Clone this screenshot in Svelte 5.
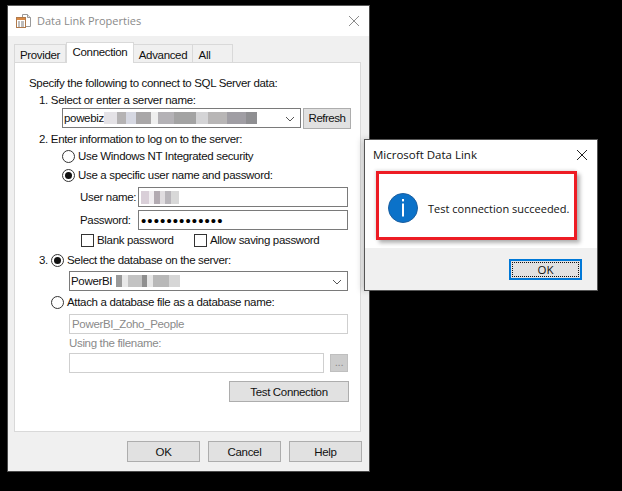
<script>
    const dots = '•••••••••••••';
</script>

<main class="desktop">
    <section class="dialog props">
        <header class="titlebar">
            <svg class="app-icon" width="16" height="16" viewBox="0 0 16 16">
                <path d="M6.5 1.5h5l3 3v9h-8z" fill="#fff" stroke="#9a9a9a" />
                <path d="M11.5 1.5v3h3" fill="#e6e6e6" stroke="#9a9a9a" />
                <rect x="0.5" y="4.5" width="9" height="10" fill="#fff" stroke="#b07a4c" />
                <rect x="1" y="5" width="8" height="2" fill="#d98a45" />
                <path d="M2 9h2M5 9h3M2 11h2M5 11h3M2 13h2M5 13h3" stroke="#7d7d7d" />
            </svg>
            <span class="title">Data Link Properties</span>
            <svg class="close" width="12" height="12" viewBox="0 0 12 12">
                <path d="M1 1l10 10M11 1L1 11" stroke="#8c8c8c" fill="none" />
            </svg>
        </header>

        <div class="body">
            <div class="tabs">
                <div class="tab t1">Provider</div>
                <div class="tab t2 active">Connection</div>
                <div class="tab t3">Advanced</div>
                <div class="tab t4">All</div>
            </div>

            <div class="panel">
                <div class="row">Specify the following to connect to SQL Server data:</div>
                <div class="row step">1. Select or enter a server name:</div>
                <div class="server-row">
                    <div class="combo server">
                        <span>powebiz</span><span class="blur blur-server"></span>
                        <svg class="chev" width="10" height="6" viewBox="0 0 10 6"><path d="M1 1l4 4 4-4" fill="none" stroke="#555" /></svg>
                    </div>
                    <div class="btn refresh">Refresh</div>
                </div>
                <div class="row step gap-s">2. Enter information to log on to the server:</div>
                <div class="row radio-row indent nudge">
                    <span class="radio"></span>Use Windows NT Integrated security
                </div>
                <div class="row radio-row indent gap-xs">
                    <span class="radio on"></span>Use a specific user name and password:
                </div>
                <div class="field-row first">
                    <label for="user">User name:</label>
                    <div id="user" class="input"><span class="blur blur-user"></span></div>
                </div>
                <div class="field-row second">
                    <label for="pass">Password:</label>
                    <div id="pass" class="input dots">{dots}</div>
                </div>
                <div class="row checks">
                    <span class="check-item c1"><span class="check"></span>Blank password</span>
                    <span class="check-item"><span class="check"></span>Allow saving password</span>
                </div>
                <div class="row radio-row db">
                    <span class="num">3.</span><span class="radio on"></span>Select the database on the server:
                </div>
                <div class="combo db-combo">
                    <span>PowerBI</span><span class="blur blur-db"></span>
                    <svg class="chev" width="10" height="6" viewBox="0 0 10 6"><path d="M1 1l4 4 4-4" fill="none" stroke="#555" /></svg>
                </div>
                <div class="row radio-row attach">
                    <span class="radio"></span>Attach a database file as a database name:
                </div>
                <div class="input wide disabled-input">PowerBI_Zoho_People</div>
                <div class="row muted using">Using the filename:</div>
                <div class="file-row">
                    <div class="input file"></div>
                    <div class="browse">...</div>
                </div>
                <div class="test-row"><div class="btn test">Test Connection</div></div>
            </div>

            <footer class="actions">
                <div class="btn act">OK</div>
                <div class="btn act">Cancel</div>
                <div class="btn act">Help</div>
            </footer>
        </div>
    </section>

    <section class="dialog msg">
        <div class="msg-top">
            <header class="msg-title">
                <span>Microsoft Data Link</span>
                <svg width="12" height="12" viewBox="0 0 12 12">
                    <path d="M1 1l10 10M11 1L1 11" stroke="#222" fill="none" />
                </svg>
            </header>
            <div class="msg-content">
                <svg width="30" height="30" viewBox="0 0 30 30">
                    <circle cx="15" cy="15" r="14.5" fill="#0b72c9" stroke="#1b5e9f" />
                    <rect x="14" y="6" width="2" height="2.4" fill="#fff" />
                    <rect x="14" y="10.5" width="2" height="13" fill="#fff" />
                </svg>
                <span>Test connection succeeded.</span>
            </div>
        </div>
        <div class="msg-foot">
            <div class="msg-ok"><span>OK</span></div>
        </div>
    </section>
</main>

<style>
    :global(body) {
        margin: 0;
        background: #000;
    }

    .desktop {
        position: relative;
        width: 622px;
        height: 491px;
        background: #000;
        overflow: hidden;
        font-family: "Liberation Sans", Arial, sans-serif;
        font-size: 11.5px;
        letter-spacing: -0.33px;
        color: #111;
    }

    .dialog {
        position: absolute;
        box-sizing: border-box;
    }

    .props {
        left: 7px;
        top: 5px;
        width: 363px;
        height: 467px;
        border: 1px solid #4a4a4a;
        border-top: 1px solid #5a5a5a;
        background: #f0f0f0;
    }

    .titlebar {
        display: flex;
        align-items: center;
        height: 30px;
        padding: 0 9px 0 8px;
        background: #fff;
    }

    .app-icon {
        margin-right: 5px;
    }

    .title {
        flex: 1;
        margin-top: -2px;
        font-family: "Open Sans", sans-serif;
        font-size: 11px;
        letter-spacing: 0;
        color: #8a8a8a;
    }

    .body {
        padding: 7px 0 0 6px;
    }

    .tabs {
        display: flex;
        align-items: flex-end;
        height: 20px;
        position: relative;
        z-index: 1;
        margin-bottom: -1px;
    }

    .tab {
        box-sizing: border-box;
        height: 19px;
        line-height: 20px;
        text-align: center;
        border: 1px solid #d9d9d9;
        border-left: 0;
        border-bottom: 0;
    }

    .t1 { width: 52px; border-left: 1px solid #d9d9d9; }
    .t3 { width: 59px; }
    .t4 { width: 40px; padding-right: 16px; }
    .t2 {
        width: 68px;
        height: 21px;
        line-height: 19px;
        background: #fff;
        border-left: 1px solid #d9d9d9;
    }

    .panel {
        box-sizing: border-box;
        width: 347px;
        height: 370px;
        padding: 12px 0 0 14px;
        background: #fff;
        border: 1px solid #d9d9d9;
    }

    .row {
        height: 16px;
        line-height: 16px;
        white-space: nowrap;
    }

    .step { margin-left: 10px; margin-top: 1px; }
    .gap-s { margin-top: 3px; }
    .indent { margin-left: 33px; }
    .nudge { margin-top: 1px; }
    .gap-xs { margin-top: 3px; }

    .radio-row {
        display: flex;
        align-items: center;
    }

    .radio {
        box-sizing: border-box;
        width: 13px;
        height: 13px;
        margin-right: 3px;
        border: 1px solid #333;
        border-radius: 50%;
        background: #fff;
        position: relative;
    }

    .radio.on::after {
        content: "";
        position: absolute;
        left: 2px;
        top: 2px;
        width: 7px;
        height: 7px;
        border-radius: 50%;
        background: #111;
    }

    .server-row {
        display: flex;
        align-items: center;
        margin-left: 33px;
        height: 20px;
    }

    .combo {
        box-sizing: border-box;
        display: flex;
        align-items: center;
        position: relative;
        height: 20px;
        padding-left: 1px;
        background: #fff;
        border: 1px solid #7a7a7a;
    }

    .server { width: 239px; }

    .chev {
        position: absolute;
        right: 5px;
        top: 7px;
    }

    .blur {
        display: inline-block;
        height: 12px;
        filter: blur(0.7px);
    }

    .blur-server {
        width: 158px;
        background: linear-gradient(90deg, #e4e2e6 0 8%, #b5b3b4 8% 14%, #d6d8e2 14% 20%, #a9a7a8 20% 30%, #efefef 30% 34%, #b4b2b6 34% 44%, #a3a3a3 44% 58%, #d4d4d6 58% 66%, #b8b6b6 66% 78%, #a09ea4 78% 90%, #8f8f92 90% 97%, #fff 97%);
    }

    .blur-user {
        width: 38px;
        height: 13px;
        background: linear-gradient(90deg, #d9cfd8 0 20%, #f1eef1 20% 35%, #b3abb2 35% 50%, #e0dde0 50% 62%, #b9b6bb 62% 78%, #d8d8d8 78% 100%);
    }

    .blur-db {
        width: 68px;
        height: 12px;
        background: linear-gradient(90deg, #fff 0 6%, #9a9a9a 6% 14%, #e9e9e9 14% 24%, #c3c3c3 24% 44%, #8f8f8f 44% 52%, #e6e6e6 52% 60%, #b8b8b8 60% 84%, #d6d6d6 84% 100%);
    }

    .btn {
        box-sizing: border-box;
        display: flex;
        align-items: center;
        justify-content: center;
        background: #e1e1e1;
        border: 1px solid #adadad;
    }

    .refresh {
        width: 48px;
        height: 21px;
        margin-left: 2px;
        letter-spacing: -0.5px;
    }

    .field-row {
        display: flex;
        align-items: center;
        height: 20px;
        margin-left: 51px;
    }

    .field-row.first { margin-top: 4px; }
    .field-row.second { margin-top: 3px; }

    .field-row label {
        width: 58px;
        flex-shrink: 0;
        white-space: nowrap;
    }

    .input {
        box-sizing: border-box;
        display: flex;
        align-items: center;
        height: 20px;
        width: 210px;
        padding-left: 2px;
        background: #fff;
        border: 1px solid #7a7a7a;
    }

    .dots {
        font-size: 15px;
        letter-spacing: 1.1px;
        color: #000;
    }

    .checks {
        display: flex;
        margin-left: 51px;
        margin-top: 2px;
    }

    .check-item {
        display: flex;
        align-items: center;
    }

    .c1 { width: 113px; }

    .check {
        box-sizing: border-box;
        width: 13px;
        height: 13px;
        margin: 0 3px 0 1px;
        border: 1px solid #333;
        background: #fff;
    }

    .db {
        margin-left: 10px;
        margin-top: 4px;
    }

    .num {
        width: 12px;
    }

    .db-combo {
        width: 279px;
        margin-left: 40px;
        margin-top: 3px;
    }

    .attach {
        margin-left: 22px;
        margin-top: 3px;
    }

    .disabled-input,
    .file {
        border-color: #cfcfcf;
    }

    .wide {
        width: 279px;
        margin-left: 40px;
        margin-top: 4px;
        color: #8a8a8a;
    }

    .muted {
        color: #8a8a8a;
    }

    .using {
        margin-left: 40px;
        margin-top: 1px;
    }

    .file-row {
        display: flex;
        align-items: center;
        margin-left: 40px;
        margin-top: 2px;
    }

    .file {
        width: 255px;
    }

    .browse {
        box-sizing: border-box;
        display: flex;
        justify-content: center;
        width: 18px;
        height: 18px;
        margin-left: 6px;
        line-height: 14px;
        color: #8a8a8a;
        background: #ccc;
        border: 1px solid #bfbfbf;
    }

    .test-row {
        display: flex;
        justify-content: flex-end;
        margin-top: 8px;
        padding-right: 11px;
    }

    .test {
        width: 120px;
        height: 21px;
    }

    .actions {
        display: flex;
        justify-content: flex-end;
        gap: 8px;
        margin-top: 9px;
        padding-right: 7px;
    }

    .act {
        width: 73px;
        height: 21px;
    }

    .msg {
        left: 364px;
        top: 139px;
        width: 234px;
        height: 152px;
        border: 1px solid #555;
        background: #f0f0f0;
        font-family: "Open Sans", sans-serif;
        letter-spacing: 0;
        box-shadow: -3px 0 6px rgba(0, 0, 0, 0.15);
    }

    .msg-top {
        height: 108px;
        background: #fff;
    }

    .msg-title {
        display: flex;
        align-items: center;
        justify-content: space-between;
        height: 30px;
        padding: 0 9px 0 8px;
        color: #111;
    }

    .msg-title span {
        margin-top: -2px;
    }

    .msg-content {
        box-sizing: border-box;
        position: absolute;
        left: 11px;
        top: 31px;
        width: 201px;
        height: 69px;
        display: flex;
        align-items: center;
        gap: 10px;
        padding: 5px 0 0 9px;
        border: 3px solid #ed1c24;
        box-shadow: 3px 3px 4px rgba(0, 0, 0, 0.3), -1px -1px 3px rgba(0, 0, 0, 0.12);
        color: #111;
        font-size: 11px;
        white-space: nowrap;
    }

    .msg-foot {
        display: flex;
        justify-content: flex-end;
        padding: 11px 15px 0 0;
    }

    .msg-ok {
        box-sizing: border-box;
        width: 73px;
        height: 21px;
        padding: 1px;
        background: #e1e1e1;
        border: 2px solid #0078d7;
    }

    .msg-ok span {
        box-sizing: border-box;
        display: flex;
        align-items: center;
        justify-content: center;
        height: 100%;
        border: 1px dotted #111;
        font-size: 11.5px;
    }
</style>
